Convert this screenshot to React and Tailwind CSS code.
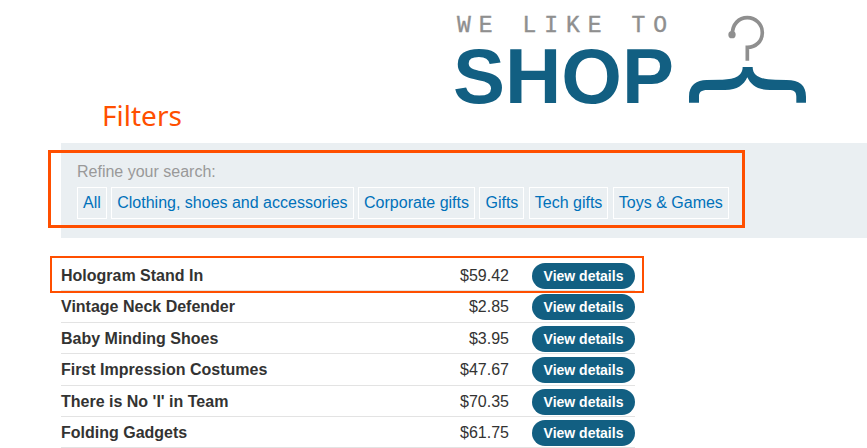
const filters = [
  "All",
  "Clothing, shoes and accessories",
  "Corporate gifts",
  "Gifts",
  "Tech gifts",
  "Toys & Games",
];

const products = [
  { name: "Hologram Stand In", price: "$59.42" },
  { name: "Vintage Neck Defender", price: "$2.85" },
  { name: "Baby Minding Shoes", price: "$3.95" },
  { name: "First Impression Costumes", price: "$47.67" },
  { name: "There is No 'I' in Team", price: "$70.35" },
  { name: "Folding Gadgets", price: "$61.75" },
];

function Logo() {
  return (
    <svg width="350" height="88" viewBox="0 0 350 88" role="img" aria-label="We like to shop" className="overflow-visible">
      <text
        x="1"
        y="16"
        fontSize="23"
        fill="#8f8f8f"
        stroke="#8f8f8f"
        strokeWidth="0.4"
        className="font-['Liberation_Mono',monospace] tracking-[8px]"
      >
        WE LIKE TO
      </text>
      <text x="-3" y="87" fontSize="78" fontWeight="700" fill="#125f82" className="font-['Liberation_Sans',Arial,sans-serif]">
        SHOP
      </text>
      <g transform="translate(214 -16) scale(0.3333)">
        <path
          d="M187 103C187 72 207 53 232 53C257 53 277 73 277 98C277 123 258 142 232 142V182"
          fill="none"
          stroke="#8f8f8f"
          strokeWidth="11"
        />
        <circle cx="186" cy="104" r="11" fill="#8f8f8f" />
        <path
          d="M57 308V290C57 255 80 240 110 240L150 239C190 239 218 230 218 201H248C248 230 276 239 316 239L350 240C388 240 408 255 408 290V308H379V290C379 275 372 270 355 270H300C262 270 243 255 232 232C221 255 203 270 165 270H112C94 270 87 276 87 290V308Z"
          fill="#125f82"
        />
      </g>
    </svg>
  );
}

function FilterBar() {
  return (
    <section className="relative h-[95px] bg-[#eaeff2] px-4 pt-[17px]">
      <p className="leading-6 text-[#999999]">Refine your search:</p>
      <ul className="mt-[3px] whitespace-nowrap">
        {filters.map((name) => (
          <li key={name} className="inline">
            <a href="#" className="inline-block h-8 border border-white px-[5px] leading-[30px] text-[#0071ba]">
              {name}
            </a>{" "}
          </li>
        ))}
      </ul>
      <div className="pointer-events-none absolute -left-[13px] top-[7px] h-[78px] w-[697px] border-3 border-[#ff4f00]" />
    </section>
  );
}

function ProductList() {
  return (
    <div className="relative mt-[22px] w-full max-w-[574px]">
      <table className="w-full border-separate border-spacing-0">
        <tbody>
          {products.map((product) => (
            <tr
              key={product.name}
              className="h-[31px] nth-[2]:h-8 nth-[4]:h-8 *:border-b *:border-[#e3e3e3] *:p-0 *:pt-[3px] *:align-top"
            >
              <th scope="row" className="text-left leading-[26px] font-bold">
                {product.name}
              </th>
              <td className="text-right leading-[26px]">{product.price}</td>
              <td className="w-[126px]">
                <a
                  href="#"
                  className="ml-[23px] block h-[26px] rounded-full bg-[#125f82] text-center text-sm leading-[26px] font-bold whitespace-nowrap text-white"
                >
                  View details
                </a>
              </td>
            </tr>
          ))}
        </tbody>
      </table>
      <div className="pointer-events-none absolute -top-1 -right-[9px] -left-[11px] h-[37px] border-2 border-[#ff4f00]" />
    </div>
  );
}

export default function App() {
  return (
    <main className="overflow-hidden bg-white pl-[61px] font-['Liberation_Sans',Arial,sans-serif] text-base text-[#333332]">
      <header className="flex pt-4 pl-[395px]">
        <Logo />
      </header>
      <h1 className="pb-[17px] pl-[41px] font-['Noto_Sans',sans-serif] text-[28px] leading-[22px] font-normal text-[#ff4f00]">
        Filters
      </h1>
      <FilterBar />
      <ProductList />
    </main>
  );
}
